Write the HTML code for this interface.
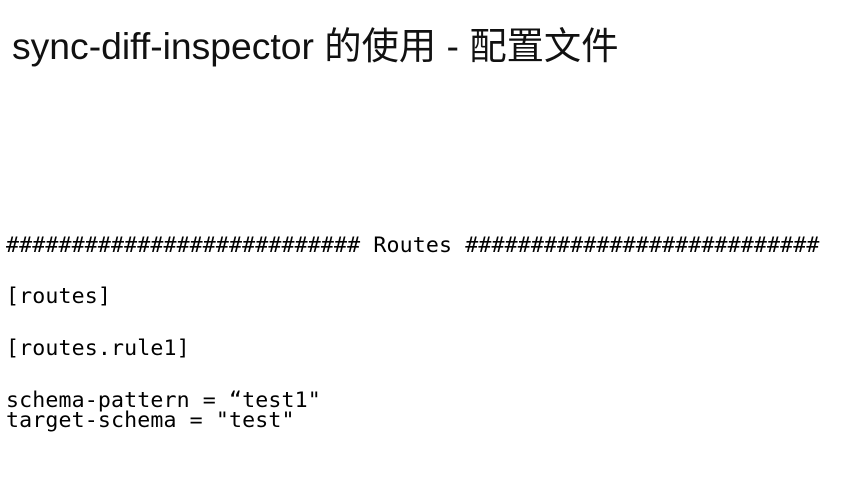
<!DOCTYPE html>
<html><head><meta charset="utf-8"><style>
body{margin:0;width:844px;height:500px;background:#fff;overflow:hidden;position:relative}
.t{position:absolute;left:12px;top:16px;font:37.3px "Liberation Sans","Noto Sans CJK SC",sans-serif;color:#111;white-space:nowrap}
.c{position:absolute;left:6px;font:21.6px "DejaVu Sans Mono","Liberation Mono",monospace;color:#000;white-space:pre;line-height:20px;letter-spacing:0.12px}
</style></head><body>
<div class="t">sync-diff-inspector 的使用 - 配置文件</div>
<div class="c" style="top:236px">########################### Routes ###########################</div>
<div class="c" style="top:287px">[routes]</div>
<div class="c" style="top:339px">[routes.rule1]</div>
<div class="c" style="top:391px">schema-pattern = “test1"
target-schema = "test"</div>
</body></html>
